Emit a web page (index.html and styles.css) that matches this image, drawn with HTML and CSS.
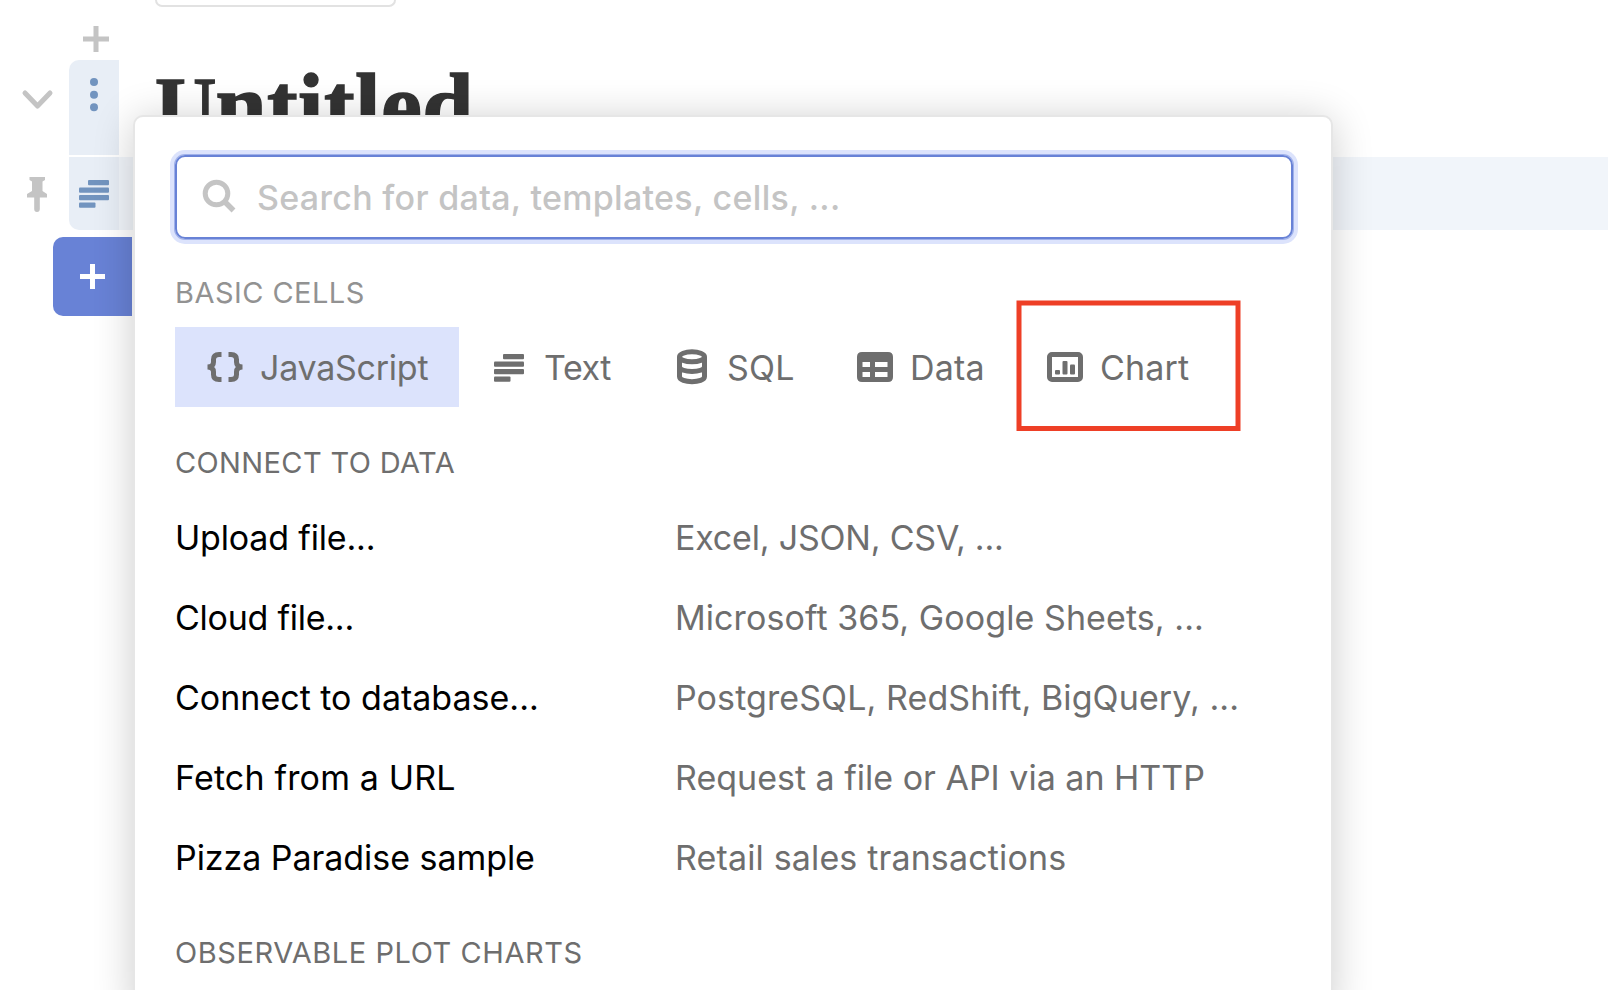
FILE: index.html
```html
<!DOCTYPE html>
<html lang="en">
<head>
<meta charset="utf-8">
<title>Untitled</title>
<link rel="stylesheet" href="styles.css">
</head>
<body>
<main class="notebook">
  <header class="top">
    <svg class="insert" width="26" height="26" viewBox="0 0 26 26"><path d="M13 0v26M0 13h26" stroke="#c4c4c4" stroke-width="5"/></svg>
    <div class="top-box"></div>
  </header>
  <section class="cell cell-title">
    <div class="side"><svg width="32" height="20" viewBox="0 0 32 20"><path d="M3 3l12.500 13L28 3" fill="none" stroke="#c4c4c4" stroke-width="5" stroke-linecap="round" stroke-linejoin="round"/></svg></div>
    <div class="handle handle-first"><svg width="8" height="34" viewBox="0 0 8 34" fill="#7294bf"><circle cx="4" cy="4" r="4"/><circle cx="4" cy="16.700" r="4"/><circle cx="4" cy="29.200" r="4"/></svg></div>
    <h1 class="title">Untitled</h1>
  </section>
  <section class="cell cell-text">
    <div class="side side-pin"><svg width="20" height="35" viewBox="0 0 20 35" fill="#c4c4c4"><path d="M2.500 0H18v3l-2.500 1.500V14l4.500 3v3.500h-7.200V32q0 3-2.800 3t-2.800-3V20.500H0V17l5-3V4.500L2.500 3z"/></svg></div>
    <div class="handle handle-last"><svg width="30" height="28" viewBox="0 0 30 28" fill="#7294bf"><rect x="9" width="21" height="5.300" rx="1"/><rect y="7.500" width="30" height="5.300" rx="1"/><rect y="15" width="30" height="5.300" rx="1"/><rect y="22.500" width="16.500" height="5.300" rx="1"/></svg></div>
    <div class="cell-body"></div>
  </section>
  <button class="add"><svg width="25" height="25" viewBox="0 0 25 25"><path d="M12.500 0v25M0 12.500h25" stroke="#fff" stroke-width="5"/></svg></button>
</main>

<div class="menu">
  <div class="search">
    <svg width="34" height="34" viewBox="0 0 34 34" fill="none" stroke="#c4c4c4" stroke-width="5"><circle cx="14.500" cy="13.500" r="11.300"/><path d="M22.500 21.500l9 9" stroke-width="5.500"/></svg>
    <span>Search for data, templates, cells, ...</span>
  </div>
  <h2 class="caption caption-basic">BASIC CELLS</h2>
  <div class="tabs">
    <div class="tab tab-js active"><svg class="icon" width="36" height="36" viewBox="0 0 36 36" fill="none" stroke="#6e6e6e" stroke-width="5"><path d="M14.500 5.500H12q-5.500 0-5.500 5v2.500q0 5-6 5 6 0 6 5v2.500q0 5 5.500 5h2.500M21.500 5.500H24q5.500 0 5.500 5v2.500q0 5 6 5-6 0-6 5v2.500q0 5-5.500 5h-2.500"/></svg><span>JavaScript</span></div>
    <div class="tab tab-text"><svg class="icon" width="36" height="36" viewBox="0 0 36 36" fill="#6e6e6e"><rect x="12" y="5" width="21" height="5.300" rx="1"/><rect x="3" y="12.500" width="30" height="5.300" rx="1"/><rect x="3" y="20" width="30" height="5.300" rx="1"/><rect x="3" y="27.500" width="16.500" height="5.300" rx="1"/></svg><span>Text</span></div>
    <div class="tab tab-sql"><svg class="icon" width="36" height="36" viewBox="0 0 36 36" fill="none" stroke="#6e6e6e" stroke-width="5"><ellipse cx="18" cy="7.800" rx="12.500" ry="5"/><path d="M5.500 8v19.500c0 7 25 7 25 0V8M5.500 17.500c0 6.700 25 6.700 25 0"/></svg><span>SQL</span></div>
    <div class="tab tab-data"><svg class="icon" width="36" height="36" viewBox="0 0 36 36"><path fill="#6e6e6e" fill-rule="evenodd" d="M5 3h26q5 0 5 5v20q0 5-5 5H5q-5 0-5-5V8q0-5 5-5zM5.500 13v5H13v-5zM18 13v5h12.500v-5zM5.500 23v5H13v-5zM18 23v5h12.500v-5z"/></svg><span>Data</span></div>
    <div class="tab tab-chart"><svg class="icon" width="36" height="36" viewBox="0 0 36 36" fill="#6e6e6e"><rect x="2.500" y="5.500" width="31" height="25" rx="2.500" fill="none" stroke="#6e6e6e" stroke-width="5"/><rect x="8" y="21" width="5" height="4.500" rx="1"/><rect x="15.500" y="12" width="5" height="13.500" rx="1"/><rect x="23" y="15.500" width="5" height="10" rx="1"/></svg><span>Chart</span></div>
  </div>
  <h2 class="caption caption-connect">CONNECT TO DATA</h2>
  <ul class="sources">
    <li><span class="n1">Upload file...</span><span class="hint h1">Excel, JSON, CSV, ...</span></li>
    <li><span class="n2">Cloud file...</span><span class="hint h2">Microsoft 365, Google Sheets, ...</span></li>
    <li><span class="n3">Connect to database...</span><span class="hint h3">PostgreSQL, RedShift, BigQuery, ...</span></li>
    <li><span class="n4">Fetch from a URL</span><span class="hint h4">Request a file or API via an HTTP</span></li>
    <li><span class="n5">Pizza Paradise sample</span><span class="hint h5">Retail sales transactions</span></li>
  </ul>
  <h2 class="caption caption-plot">OBSERVABLE PLOT CHARTS</h2>
  <svg class="highlight" width="226" height="132" viewBox="0 0 226 132"><rect x="3" y="3" width="219" height="125.500" fill="none" stroke="#ee3f26" stroke-width="5"/></svg>
</div>
</body>
</html>
```
FILE: styles.css
```css
* { box-sizing: border-box; }
body {
  margin: 0;
  width: 1608px;
  height: 990px;
  overflow: hidden;
  position: relative;
  background: #fff;
  font-family: Inter, "Liberation Sans", sans-serif;
  font-size: 34px;
}
svg { display: block; flex: none; overflow: visible; }

.top { height: 60px; display: flex; align-items: flex-start; }
.insert { margin: 25.500px 0 0 82.500px; }
.top-box {
  width: 241px;
  height: 7px;
  margin-left: 46px;
  border: 2px solid #e2e2e2;
  border-top: 0;
  border-radius: 0 0 10px 10px;
}

.cell { display: flex; }
.cell-title { height: 95px; margin-bottom: 2px; }
.cell-text { height: 73px; }
.cell-body { flex: 1; background: #f1f5fa; }
.side { width: 69px; flex: none; padding: 29.500px 0 0 21.500px; }
.side-pin { padding: 20px 0 0 27px; }
.handle { width: 50px; flex: none; display: flex; justify-content: center; background: #e8eef6; }
.handle-first { padding-top: 18px; border-radius: 10px 0 0 0; }
.handle-last { padding-top: 23px; border-radius: 0 0 0 10px; }
.title {
  margin: -5px 0 0 36px;
  font: bold 92px/100px "Liberation Serif", serif;
  letter-spacing: .4px;
  color: #333;
  -webkit-text-stroke: 1.500px #333;
}
.title::first-letter { font-size: 85px; letter-spacing: -1px; }
.add {
  display: flex;
  align-items: center;
  width: 79px;
  height: 79px;
  margin: 7px 0 0 53px;
  padding: 0 0 0 27px;
  border: 0;
  border-radius: 10px 0 0 10px;
  background: #6882d6;
}

.menu {
  position: absolute;
  left: 133px;
  top: 115px;
  width: 1200px;
  height: 900px;
  padding: 38px 38px 0 40px;
  border: 2px solid #e6e6e6;
  border-radius: 10px;
  background: #fff;
  box-shadow: 0 4px 40px rgba(0, 0, 0, .2);
}
.search {
  display: flex;
  align-items: center;
  width: 1118px;
  height: 84px;
  padding-left: 25px;
  border: 2px solid #6882d6;
  border-radius: 10px;
  box-shadow: 0 0 0 1px #a0b1ea, 0 0 0 5px #dce3fc;
  color: #c4c4c4;
}
.search span { margin-left: 21px; font-weight: 500; letter-spacing: .3px; }
.caption {
  margin: 0;
  height: 40px;
  font-size: 29px;
  font-weight: 400;
  line-height: 40px;
  color: #6e6e6e;
  white-space: nowrap;
}
.caption-basic { margin-top: 34px; color: #929292; letter-spacing: .45px; }
.caption-connect { margin-top: 36px; letter-spacing: .37px; }
.caption-plot { margin-top: 36px; letter-spacing: .56px; }

.tabs { display: flex; height: 80px; margin-top: 14px; color: #6e6e6e; }
.tab { display: flex; align-items: center; padding-left: 32px; white-space: nowrap; }
.tab span { margin-left: 17px; }
.active { background: #dce3fc; }
.tab-js { width: 284px; letter-spacing: -.25px; }
.tab-text { width: 183px; letter-spacing: -.4px; }
.tab-sql { width: 183px; letter-spacing: .2px; }
.tab-data { width: 190px; letter-spacing: .2px; }
.tab-chart { width: 206px; letter-spacing: .15px; }

.sources { list-style: none; margin: 14px 0 0; padding: 0; color: #000; }
.sources li {
  display: grid;
  grid-template-columns: 500px 1fr;
  align-items: center;
  height: 80px;
  white-space: nowrap;
}
.hint { color: #6e6e6e; }

/* Optical tracking per label */
.n1 { letter-spacing: -.18px; }
.n2 { letter-spacing: -.25px; }
.n4 { letter-spacing: .17px; }
.n5 { letter-spacing: -.05px; }
.h1 { letter-spacing: -.2px; }
.h2 { letter-spacing: .08px; }
.h3 { letter-spacing: .09px; }
.h5 { letter-spacing: .15px; }

.highlight {
  position: absolute;
  left: 881px;
  top: 183px;
}
```
